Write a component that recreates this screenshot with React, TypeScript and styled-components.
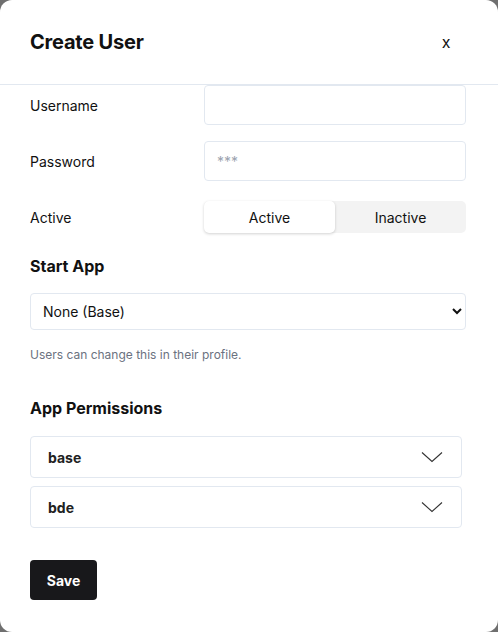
import React, { useState } from 'react';
import styled, { createGlobalStyle } from 'styled-components';

const BORDER = '#e2e8f0';
const TEXT = '#111111';

const GlobalStyle = createGlobalStyle`
  html, body {
    margin: 0;
    padding: 0;
    background: #6f6f6f;
    font-family: Inter, "Noto Sans", sans-serif;
    color: ${TEXT};
  }
  * { box-sizing: border-box; }
`;

const Modal = styled.div`
  width: 498px;
  height: 632px;
  background: #ffffff;
  border-radius: 12px;
  overflow: hidden;
  display: flex;
  flex-direction: column;
`;

const Header = styled.header`
  height: 85px;
  flex-shrink: 0;
  display: flex;
  align-items: center;
  justify-content: space-between;
  padding: 0 36px 0 30px;
  border-bottom: 1px solid ${BORDER};
`;

const Title = styled.h2`
  margin: 0;
  font-size: 20px;
  font-weight: 700;
  letter-spacing: -0.2px;
`;

const CloseButton = styled.button`
  width: 32px;
  height: 32px;
  border: none;
  background: transparent;
  font-family: Inter, sans-serif;
  font-size: 16px;
  color: ${TEXT};
  cursor: pointer;
  padding: 0;
`;

const Body = styled.div`
  padding: 0 32px 30px 30px;
  display: flex;
  flex-direction: column;
`;

const FormRows = styled.div`
  display: flex;
  flex-direction: column;
  gap: 16px;
`;

const Row = styled.div`
  display: grid;
  grid-template-columns: 174px 1fr;
  align-items: center;
  height: 40px;
`;

const Label = styled.label`
  font-size: 14px;
  font-weight: 400;
`;

const Input = styled.input`
  height: 40px;
  width: 100%;
  border: 1px solid ${BORDER};
  border-radius: 4px;
  padding: 0 12px;
  font-family: Inter, sans-serif;
  font-size: 14px;
  outline: none;
  &::placeholder { color: #9ca3af; }
`;

const Segmented = styled.div`
  display: grid;
  grid-template-columns: 1fr 1fr;
  height: 32px;
  background: #f3f3f3;
  border-radius: 5px;
`;

const Segment = styled.button<{ $selected: boolean }>`
  border: none;
  border-radius: 5px;
  font-family: Inter, sans-serif;
  font-size: 14px;
  color: ${TEXT};
  background: ${(p) => (p.$selected ? '#ffffff' : 'transparent')};
  box-shadow: ${(p) => (p.$selected ? '0 1px 3px rgba(0,0,0,0.18)' : 'none')};
  cursor: pointer;
`;

const SectionTitle = styled.h3<{ $top: number }>`
  margin: ${(p) => p.$top}px 0 15px;
  font-size: 16px;
  line-height: 24px;
  font-weight: 700;
`;

const Select = styled.select`
  height: 37px;
  width: 100%;
  border: 1px solid ${BORDER};
  border-radius: 4px;
  padding: 0 8px;
  font-family: Inter, sans-serif;
  font-size: 14px;
  color: ${TEXT};
  background: #ffffff;
`;

const Hint = styled.p`
  margin: 17px 0 0;
  font-size: 12px;
  line-height: 16px;
  color: #6b7280;
`;

const Accordion = styled.div`
  display: flex;
  flex-direction: column;
  gap: 8px;
  margin: 1px 4px 0 0;
`;

const AccordionItem = styled.button`
  height: 42px;
  display: flex;
  align-items: center;
  justify-content: space-between;
  padding: 0 18px 0 17px;
  border: 1px solid ${BORDER};
  border-radius: 4px;
  background: #ffffff;
  font-family: Inter, sans-serif;
  font-size: 14px;
  font-weight: 700;
  color: #222222;
  cursor: pointer;
`;

const SaveButton = styled.button`
  align-self: flex-start;
  margin-top: 32px;
  height: 40px;
  width: 67px;
  border: none;
  border-radius: 4px;
  background: #18181b;
  color: #ffffff;
  font-family: Inter, sans-serif;
  font-size: 14px;
  font-weight: 700;
  cursor: pointer;
`;

const Chevron = () => (
  <svg width="22" height="12" viewBox="0 0 22 12" fill="none">
    <path d="M1 1.5 L11 10.5 L21 1.5" stroke="#333" strokeWidth="1.1" />
  </svg>
);

const apps = ['base', 'bde'];

export default function App() {
  const [active, setActive] = useState(true);

  return (
    <>
      <GlobalStyle />
      <Modal>
        <Header>
          <Title>Create User</Title>
          <CloseButton>x</CloseButton>
        </Header>
        <Body>
          <FormRows>
            <Row>
              <Label>Username</Label>
              <Input type="text" />
            </Row>
            <Row>
              <Label>Password</Label>
              <Input type="password" placeholder="***" />
            </Row>
            <Row>
              <Label>Active</Label>
              <Segmented>
                <Segment $selected={active} onClick={() => setActive(true)}>
                  Active
                </Segment>
                <Segment $selected={!active} onClick={() => setActive(false)}>
                  Inactive
                </Segment>
              </Segmented>
            </Row>
          </FormRows>

          <SectionTitle $top={17}>Start App</SectionTitle>
          <Select defaultValue="none">
            <option value="none">None (Base)</option>
          </Select>
          <Hint>Users can change this in their profile.</Hint>

          <SectionTitle $top={33}>App Permissions</SectionTitle>
          <Accordion>
            {apps.map((name) => (
              <AccordionItem key={name}>
                {name}
                <Chevron />
              </AccordionItem>
            ))}
          </Accordion>

          <SaveButton>Save</SaveButton>
        </Body>
      </Modal>
    </>
  );
}
